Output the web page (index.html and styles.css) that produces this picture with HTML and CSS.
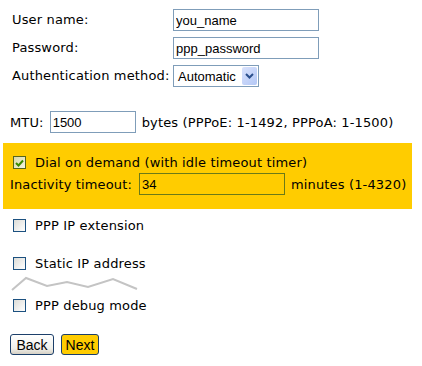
FILE: index.html
```html
<!DOCTYPE html>
<html lang="en">
<head>
  <meta charset="UTF-8" />
  <title>PPP settings</title>
  <link rel="stylesheet" href="styles.css">
</head>
<body>

<div class="login">
  <label>User name:</label>
  <input type="text" class="field wide" value="you_name">
  <label>Password:</label>
  <input type="text" class="field wide" value="ppp_password">
  <label>Authentication method:</label>
  <div class="select">
    <span>Automatic</span>
    <span class="arrow">
      <svg width="9" height="6" viewBox="0 0 9 6"><path d="M1 1 L4.5 4.5 L8 1" fill="none" stroke="#2b4f8c" stroke-width="2"/></svg>
    </span>
  </div>
</div>

<div class="row mtu">
  <label>MTU:</label>
  <input type="text" class="field small" value="1500">
  <span>bytes (PPPoE: 1-1492, PPPoA: 1-1500)</span>
</div>

<div class="demand">
  <div class="row check">
    <span class="box on">
      <svg width="9" height="8" viewBox="0 0 9 8"><path d="M1 4 L3.5 6.5 L8 1.5" fill="none" stroke="#3a8a00" stroke-width="2"/></svg>
    </span>
    <span>Dial on demand (with idle timeout timer)</span>
  </div>
  <div class="row">
    <label>Inactivity timeout:</label>
    <input type="text" class="field idle" value="34">
    <span>minutes (1-4320)</span>
  </div>
</div>

<div class="row check opt first"><span class="box"></span><span>PPP IP extension</span></div>
<div class="row check opt"><span class="box"></span><span>Static IP address</span></div>

<svg class="squiggle" width="140" height="18" viewBox="0 0 140 18">
  <filter id="soft"><feGaussianBlur stdDeviation="0.6"/></filter>
  <polyline points="12,15 26,3 47,11 67,7 88,12 113,4 137,14" fill="none" stroke="#c4c4c4" stroke-width="2" filter="url(#soft)"/>
</svg>

<div class="row check opt last"><span class="box"></span><span>PPP debug mode</span></div>

<div class="buttons">
  <button class="btn back">Back</button>
  <button class="btn next">Next</button>
</div>

</body>
</html>
```

FILE: styles.css
```css
* { box-sizing: border-box; }
body {
  margin: 0;
  font-family: 'DejaVu Sans', Verdana, sans-serif;
  font-size: 13px;
  line-height: 15px;
  letter-spacing: 0.15px;
  color: #000;
  background: #fff;
}

.login {
  display: grid;
  grid-template-columns: 161px auto;
  align-items: center;
  row-gap: 6px;
  padding: 9px 0 0 12px;
}
.login label { line-height: 22px; }

.field {
  height: 22px;
  border: 1px solid #7f9db9;
  padding: 0 2px;
  font-family: 'Liberation Sans', Arial, sans-serif;
  font-size: 13px;
  letter-spacing: 0;
  color: #000;
  background: #fff;
}
.wide { width: 146px; }
.small { width: 86px; }
.idle {
  width: 146px;
  border-color: #6b7a18;
  background: #ffcc00;
}

.select {
  width: 86px;
  height: 22px;
  border: 1px solid #7f9db9;
  display: flex;
  align-items: center;
  justify-content: space-between;
  padding: 0 1px 0 4px;
  font-family: 'Liberation Sans', Arial, sans-serif;
  font-size: 13px;
  letter-spacing: 0;
}
.select .arrow {
  width: 15px;
  height: 18px;
  border-radius: 2px;
  background: linear-gradient(135deg, #d9e2fc, #b3c7f5);
  display: flex;
  align-items: center;
  justify-content: center;
}

.row {
  display: flex;
  align-items: center;
  gap: 6px;
}
.mtu {
  margin-top: 24px;
  padding-left: 10px;
}

.demand {
  background: #ffcc00;
  margin: 10px 10px 0 3px;
  padding: 12px 0 14px 7px;
}
.demand .row { gap: 7px; }
.demand .check { padding-left: 3px; margin-bottom: 3px; gap: 9px; }
.demand .idle { margin-right: -1px; }

.box {
  width: 13px;
  height: 13px;
  border: 1px solid #1c5180;
  background: linear-gradient(135deg, #dcdcd7, #fff);
  display: flex;
  align-items: center;
  justify-content: center;
}
.box.on {
  border-color: #56651c;
  background: linear-gradient(135deg, #d8d8a8, #f4f4e0);
}
.opt { padding-left: 13px; gap: 9px; margin-top: 23px; }
.opt.first { margin-top: 9px; }
.opt.last { margin-top: 5px; }

.squiggle { display: block; margin-top: 4px; }

.buttons {
  display: flex;
  gap: 7px;
  padding: 21px 0 0 10px;
}
.btn {
  height: 21px;
  border: 1px solid #1c3f6a;
  border-radius: 3px;
  font-family: 'Liberation Sans', Arial, sans-serif;
  font-size: 14px;
  letter-spacing: 0;
  padding: 0 3px;
  color: #000;
}
.back {
  width: 44px;
  background: linear-gradient(#fff, #f0f0ea 70%, #d6d0c5);
}
.next {
  width: 38px;
  background: #ffcc00;
}
```
